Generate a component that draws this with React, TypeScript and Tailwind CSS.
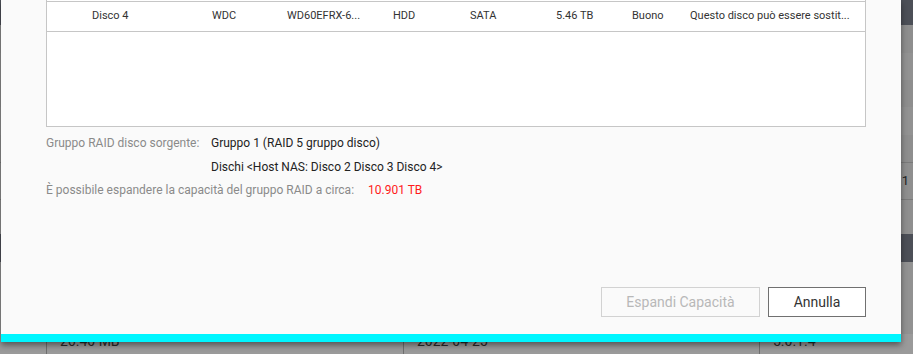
import React from "react";

const font = { fontFamily: "Roboto, 'Noto Sans', Arial, sans-serif" };

const cells = [
  { text: "Disco 4", w: "w-[120px]" },
  { text: "WDC", w: "w-[75px]" },
  { text: "WD60EFRX-6...", w: "w-[106px]" },
  { text: "HDD", w: "w-[77px]" },
  { text: "SATA", w: "w-[86px]" },
  { text: "5.46 TB", w: "w-[76px]" },
  { text: "Buono", w: "w-[58px]" },
  { text: "Questo disco può essere sostit...", w: "flex-1" },
];

function Backdrop() {
  return (
    <div className="flex h-full w-full flex-col bg-[#8f8f8f]">
      <div className="h-[26px] bg-[#4c4f57]" />
      <div className="h-[28px] bg-[#8e8e8e]" />
      <div className="h-[28px] bg-[#929292]" />
      <div className="h-[28px] bg-[#8e8e8e]" />
      <div className="h-[28px] bg-[#929292]" />
      <div className="h-[28px] bg-[#8e8e8e]" />
      <div className="flex h-[38px] items-center justify-end border-t border-[#7a7a7a] bg-[#8f8f8f] pr-1 text-[13px] text-[#1f1f1f]">
        e: 1
      </div>
      <div className="h-[36px] border-t border-[#7a7a7a] bg-[#8f8f8f]" />
      <div className="h-[28px] bg-[#4c4f57]" />
      <div className="h-[74px] bg-[#929292]" />
      <div className="flex flex-1 bg-[#9a9a9a] text-[14px] leading-none text-[#2a2a2a]">
        <div className="w-[47px] border-r border-[#6f6f6f]" />
        <div className="flex w-[357px] items-end border-r border-[#6f6f6f] pl-[13px] pb-[6px]">26.40 MB</div>
        <div className="flex w-[356px] items-end border-r border-[#6f6f6f] pl-[13px] pb-[6px]">2022-04-25</div>
        <div className="flex flex-1 items-end pl-[13px] pb-[6px]">5.0.1.4</div>
      </div>
    </div>
  );
}

export default function App() {
  return (
    <div className="relative h-[354px] w-[913px] overflow-hidden bg-[#8f8f8f]" style={font}>
      <Backdrop />
      <div className="absolute left-[1px] top-0 flex h-[342px] w-[900px] flex-col bg-[#fafafa] shadow-[0_3px_6px_rgba(0,0,0,0.45)]">
        <div className="flex flex-1 flex-col pl-[45px] pr-[35px]">
          <div className="h-[127px] border-x border-b border-[#c6c6c6] bg-white pt-[1px]">
            <div className="flex h-[31px] items-center border-y border-[#c6c6c6] pl-[45px] text-[11px] text-[#333]">
              {cells.map((c) => (
                <span key={c.text} className={`${c.w} whitespace-nowrap`}>
                  {c.text}
                </span>
              ))}
            </div>
          </div>
          <div className="mt-[5px] flex flex-col text-[12px] leading-[23.5px]">
            <div className="flex">
              <span className="w-[165px] text-[#8a8a8a]">Gruppo RAID disco sorgente:</span>
              <span className="text-[#222]">Gruppo 1 (RAID 5 gruppo disco)</span>
            </div>
            <div className="flex">
              <span className="w-[165px]" />
              <span className="text-[#222]">Dischi &lt;Host NAS: Disco 2 Disco 3 Disco 4&gt;</span>
            </div>
            <div className="flex">
              <span className="w-[322px] text-[#8a8a8a]">È possibile espandere la capacità del gruppo RAID a circa:</span>
              <span className="text-[#ff1a1a]">10.901 TB</span>
            </div>
          </div>
          <div className="mt-auto mb-[17px] flex justify-end gap-[8px]">
            <button className="h-[30px] w-[159px] border border-[#d2d2d2] bg-[#fafafa] text-[14px] text-[#b8b8b8]">
              Espandi Capacità
            </button>
            <button className="h-[30px] w-[98px] border border-[#707070] bg-white text-[14px] text-[#333]">
              Annulla
            </button>
          </div>
        </div>
        <div className="h-[8px] bg-[#00f6ff]" />
      </div>
    </div>
  );
}
